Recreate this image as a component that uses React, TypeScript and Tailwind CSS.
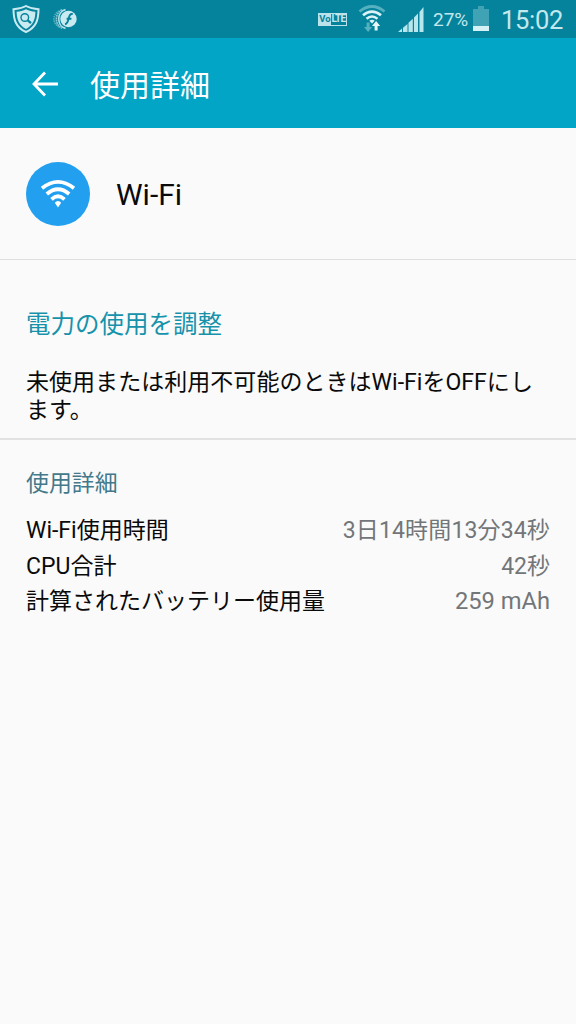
import type { ReactNode } from "react";

function ShieldIcon() {
  return (
    <svg width="28" height="30" viewBox="0 0 28 30" fill="none">
      <path
        d="M14 2C10.500 4 6.500 5 1.500 5.200C1.500 16 4 23.500 14 28C24 23.500 26.500 16 26.500 5.200C21.500 5 17.500 4 14 2Z"
        stroke="#c8eaf0"
        strokeWidth="2"
      />
      <path
        d="M14 5.200C11 6.800 8 7.600 4.600 7.800C4.900 16 7 21.300 14 25C21 21.300 23.100 16 23.400 7.800C20 7.600 17 6.800 14 5.200Z"
        fill="#c8eaf0"
      />
      <circle cx="12.800" cy="13.500" r="3.800" stroke="#06839c" strokeWidth="1.400" />
      <path d="M15.500 16.200L19 19.200" stroke="#06839c" strokeWidth="2.200" />
    </svg>
  );
}

function FlashIcon() {
  return (
    <svg width="24" height="24" viewBox="0 0 24 24" fill="none">
      <circle cx="15.500" cy="12" r="8.200" fill="#c8eaf0" />
      <path d="M12.500 2.600C3.500 4.500 3.500 19.500 12.500 21.400" stroke="#b5e0e8" strokeWidth="1.600" />
      <path d="M9 2.800C1.500 6 1.500 18 9 21.200" stroke="#8bcbd8" strokeWidth="1.600" strokeDasharray="1.800 0.600" />
      <path d="M6 3.800C-0.800 8 -0.800 16 6 20.200" stroke="#55b0c0" strokeWidth="1.500" strokeDasharray="1.500 0.800" />
      <path
        d="M19.800 7.200C17.200 6.500 16.400 8.200 15.800 11C15.100 14.500 14.500 16.800 12 17.200M13.600 11.800H18.400"
        stroke="#06839c"
        strokeWidth="1.900"
      />
    </svg>
  );
}

function VolteIcon() {
  return (
    <div className="flex h-[13px] w-[29px] items-center border border-[#b9e2ea] text-[10px] leading-none font-bold">
      <span className="flex h-full w-[12px] items-center justify-center bg-[#b9e2ea] text-[9.500px] text-[#06839c]">
        Vo
      </span>
      <span className="flex h-full flex-1 items-center justify-center tracking-[-0.7px] text-[#c3e8ee]">LTE</span>
    </div>
  );
}

function WifiDataIcon() {
  return (
    <svg width="28" height="30" viewBox="0 0 28 30" fill="none">
      <path d="M1.500 7.500Q14 -2.500 26.500 7.500" stroke="#55b0c0" strokeWidth="2.800" />
      <path d="M5 11.300Q14 3.800 23 11.300" stroke="#d9f3f7" strokeWidth="2.700" />
      <path d="M8.500 14.800Q14 10.300 19.500 14.800" stroke="#d9f3f7" strokeWidth="2.500" />
      <path d="M11.300 16.800Q14 14.800 16.700 16.800L14 19.600Z" fill="#d9f3f7" />
      <path d="M8.600 18.500H11.600V23H14.200L10.100 28L6 23H8.600Z" fill="#55b0c0" />
      <path d="M16.600 26.500V22H14L18.100 17L22.200 22H19.600V26.500Z" fill="#e6f8fa" />
    </svg>
  );
}

function SignalIcon() {
  return (
    <svg width="27" height="27" viewBox="0 0 27 27" fill="#b9e5ec">
      <path d="M0 26L4 22.500V26ZM5 21.800L9.500 18V26H5ZM10.500 16.800L14.800 12.800V26H10.500ZM16 11.500L20 7.500V26H16ZM21.500 6L25.500 1V26H21.500Z" />
    </svg>
  );
}

function BatteryIcon() {
  return (
    <svg width="16" height="26" viewBox="0 0 16 26">
      <path d="M5 0H11V3H16V20H0V3H5Z" fill="#3fa3b5" />
      <path d="M0 20H16V25H0Z" fill="#d6f1f5" />
    </svg>
  );
}

function BackIcon() {
  return (
    <svg width="26" height="26" viewBox="0 0 26 26" fill="none" stroke="#fff" strokeWidth="2.800">
      <path d="M13 1.500L2 13L13 24.500M2 13H26" />
    </svg>
  );
}

function WifiIcon() {
  return (
    <svg width="36" height="30" viewBox="0 0 36 30" fill="none" stroke="#fff" strokeWidth="3.700">
      <path d="M2 9.300Q18 -3.500 34 9.300" />
      <path d="M6.800 15Q18 5.500 29.200 15" />
      <path d="M11.500 20.300Q18 14.200 24.500 20.300" />
      <path d="M14.800 23.800Q18 20.300 21.200 23.800L18 28.500Z" fill="#fff" stroke="none" />
    </svg>
  );
}

function StatusBar() {
  return (
    <div className="flex h-[38px] items-center bg-[#06839c] text-[#c3e8ee]">
      <div className="ml-[12px]">
        <ShieldIcon />
      </div>
      <div className="ml-[13px]">
        <FlashIcon />
      </div>
      <div className="ml-auto">
        <VolteIcon />
      </div>
      <div className="ml-[11px]">
        <WifiDataIcon />
      </div>
      <div className="ml-[12px] pt-px">
        <SignalIcon />
      </div>
      <span className="ml-[8px] w-[36px] pt-[2px] text-[19px] whitespace-nowrap">27%</span>
      <div className="ml-[4px]">
        <BatteryIcon />
      </div>
      <span className="mr-[12px] ml-[12px] w-[63px] pt-[2px] text-[25.500px] tracking-[-0.3px] whitespace-nowrap">
        15:02
      </span>
    </div>
  );
}

function DetailRow({ label, children }: { label: string; children: ReactNode }) {
  return (
    <div className="flex h-[35.300px] items-center justify-between">
      <span>{label}</span>
      <span className="text-[#727678]">{children}</span>
    </div>
  );
}

function App() {
  return (
    <div className="flex h-screen flex-col bg-[#fafafa] font-[Roboto,'Noto_Sans_CJK_JP',sans-serif] text-[23px] text-[#0a0a0a]">
      <StatusBar />
      <header className="flex h-[90px] items-center bg-[#02a5c6] pl-[32px] text-white">
        <div className="pt-px">
          <BackIcon />
        </div>
        <h1 className="ml-[32px] pt-[4px] text-[30px]">使用詳細</h1>
      </header>
      <div className="flex h-[132px] items-center border-b border-[#dedede] pl-[26px]">
        <div className="flex size-[64px] items-center justify-center rounded-full bg-[#229fee]">
          <WifiIcon />
        </div>
        <span className="ml-[26px] pt-[2px] text-[30px]">Wi-Fi</span>
      </div>
      <section className="h-[180px] border-b-2 border-[#e2e2e2] px-[26px] pt-[47px]">
        <h2 className="text-[24.500px] leading-[36px] text-[#1692ab]">電力の使用を調整</h2>
        <p className="mt-[26px] leading-[28px] tracking-[0.04px]">
          未使用または利用不可能のときはWi-FiをOFFにします。
        </p>
      </section>
      <section className="px-[26px] pt-[26px]">
        <h2 className="text-[22.900px] leading-[36px] text-[#43798a]">使用詳細</h2>
        <div className="mt-[12px]">
          <DetailRow label="Wi-Fi使用時間">
            <span className="tracking-[0.15px]">3日14時間13分34秒</span>
          </DetailRow>
          <DetailRow label="CPU合計">42秒</DetailRow>
          <DetailRow label="計算されたバッテリー使用量">
            <span className="text-[23.700px]">259 mAh</span>
          </DetailRow>
        </div>
      </section>
    </div>
  );
}

export default App;
